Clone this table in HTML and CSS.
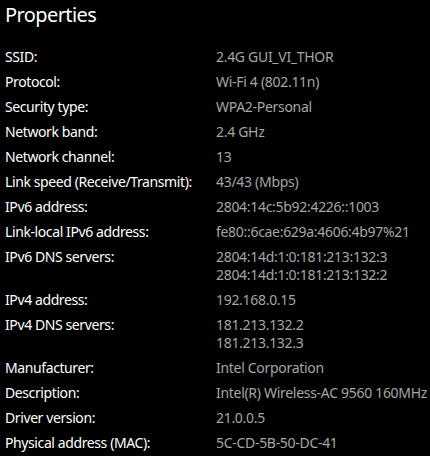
FILE: index.html
```html
<!DOCTYPE html>
<html>
<head>
<meta charset="utf-8">
<link rel="stylesheet" href="styles.css">
</head>
<body>
<div class="panel">
  <h1 class="title">Properties</h1>
  <dl class="props">
    <dt>SSID:</dt><dd>2.4G GUI_VI_THOR</dd>
    <dt>Protocol:</dt><dd>Wi-Fi 4 (802.11n)</dd>
    <dt>Security type:</dt><dd>WPA2-Personal</dd>
    <dt>Network band:</dt><dd>2.4 GHz</dd>
    <dt>Network channel:</dt><dd>13</dd>
    <dt>Link speed (Receive/Transmit):</dt><dd>43/43 (Mbps)</dd>
    <dt>IPv6 address:</dt><dd>2804:14c:5b92:4226::1003</dd>
    <dt>Link-local IPv6 address:</dt><dd>fe80::6cae:629a:4606:4b97%21</dd>
    <dt>IPv6 DNS servers:</dt><dd>2804:14d:1:0:181:213:132:3<br>2804:14d:1:0:181:213:132:2</dd>
    <dt>IPv4 address:</dt><dd>192.168.0.15</dd>
    <dt>IPv4 DNS servers:</dt><dd>181.213.132.2<br>181.213.132.3</dd>
    <dt>Manufacturer:</dt><dd>Intel Corporation</dd>
    <dt>Description:</dt><dd>Intel(R) Wireless-AC 9560 160MHz</dd>
    <dt>Driver version:</dt><dd>21.0.0.5</dd>
    <dt>Physical address (MAC):</dt><dd>5C-CD-5B-50-DC-41</dd>
  </dl>
</div>
</body>
</html>
```

FILE: styles.css
```css
html, body {
  margin: 0;
  background: #000;
}
.panel {
  padding: 0 0 0 5px;
  font-family: "Noto Sans", "Open Sans", sans-serif;
}
.title {
  margin: 0;
  font-size: 20px;
  font-weight: 400;
  line-height: 30px;
  color: #fff;
  letter-spacing: -0.6px;
}
.props {
  margin: 18px 0 0 0;
  display: grid;
  grid-template-columns: 211px 1fr;
  row-gap: 7px;
  font-size: 14px;
  line-height: 18px;
}
.props dt {
  color: #fff;
  letter-spacing: -0.4px;
}
.props dd {
  margin: 0;
  color: #a6a6a6;
  letter-spacing: -0.3px;
}
```
